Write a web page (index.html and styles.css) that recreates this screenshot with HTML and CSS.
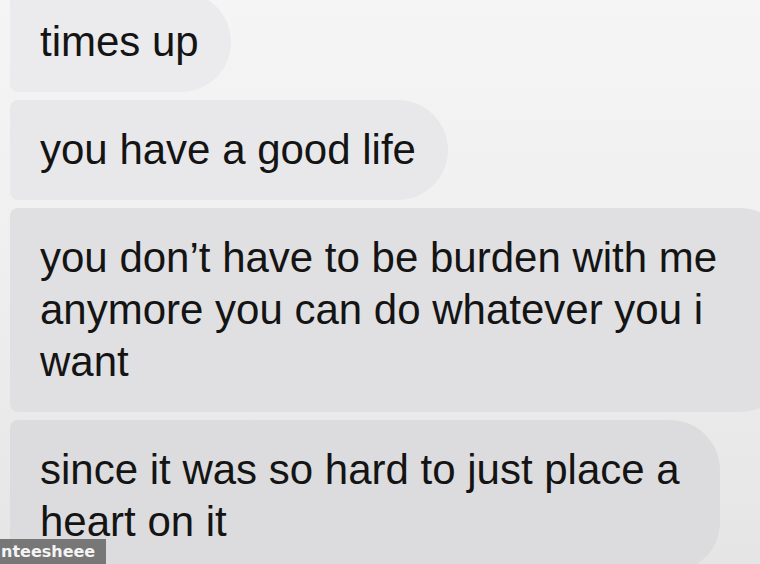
FILE: index.html
```html
<!DOCTYPE html>
<html>
<head>
<meta charset="utf-8">
<link rel="stylesheet" href="styles.css">
</head>
<body>
<div class="thread">
  <div class="bubble b1">times up</div>
  <div class="bubble b2">you have a good life</div>
  <div class="bubble b3">you don’t have to be burden with me anymore you can do whatever you i want</div>
  <div class="bubble b4">since it was so hard to just place a heart on it</div>
</div>
<div class="watermark">nteesheee</div>
</body>
</html>
```
FILE: styles.css
```css
html, body {
  margin: 0;
  padding: 0;
  width: 760px;
  height: 564px;
  overflow: hidden;
}
body {
  background: linear-gradient(180deg, #f6f5f6 0%, #f1f0f1 40%, #e6e5e6 100%);
  font-family: "Liberation Sans", Arial, sans-serif;
  position: relative;
}
.thread {
  display: flex;
  flex-direction: column;
  align-items: flex-start;
  gap: 8px;
  padding-left: 10px;
  margin-top: -8px;
}
.bubble {
  box-sizing: border-box;
  padding: 24px 32px 24px 30px;
  font-size: 42px;
  line-height: 52px;
  color: #141414;
  border-radius: 8px 50px 50px 8px;
  flex-shrink: 0;
}
.b1 { background: #ebebed; }
.b2 { background: #e8e8ea; }
.b3 { background: #e0e0e2; width: 780px; padding-right: 60px; }
.b4 { background: #dcdcde; width: 710px; padding-right: 30px; }
.watermark {
  position: absolute;
  left: 0;
  bottom: 0;
  width: 106px;
  height: 25px;
  background: #777778;
  color: #f4f4f4;
  font-family: "DejaVu Sans", sans-serif;
  font-weight: bold;
  font-size: 16px;
  line-height: 25px;
  padding-left: 1px;
  box-sizing: border-box;
  overflow: hidden;
  white-space: nowrap;
}
```
